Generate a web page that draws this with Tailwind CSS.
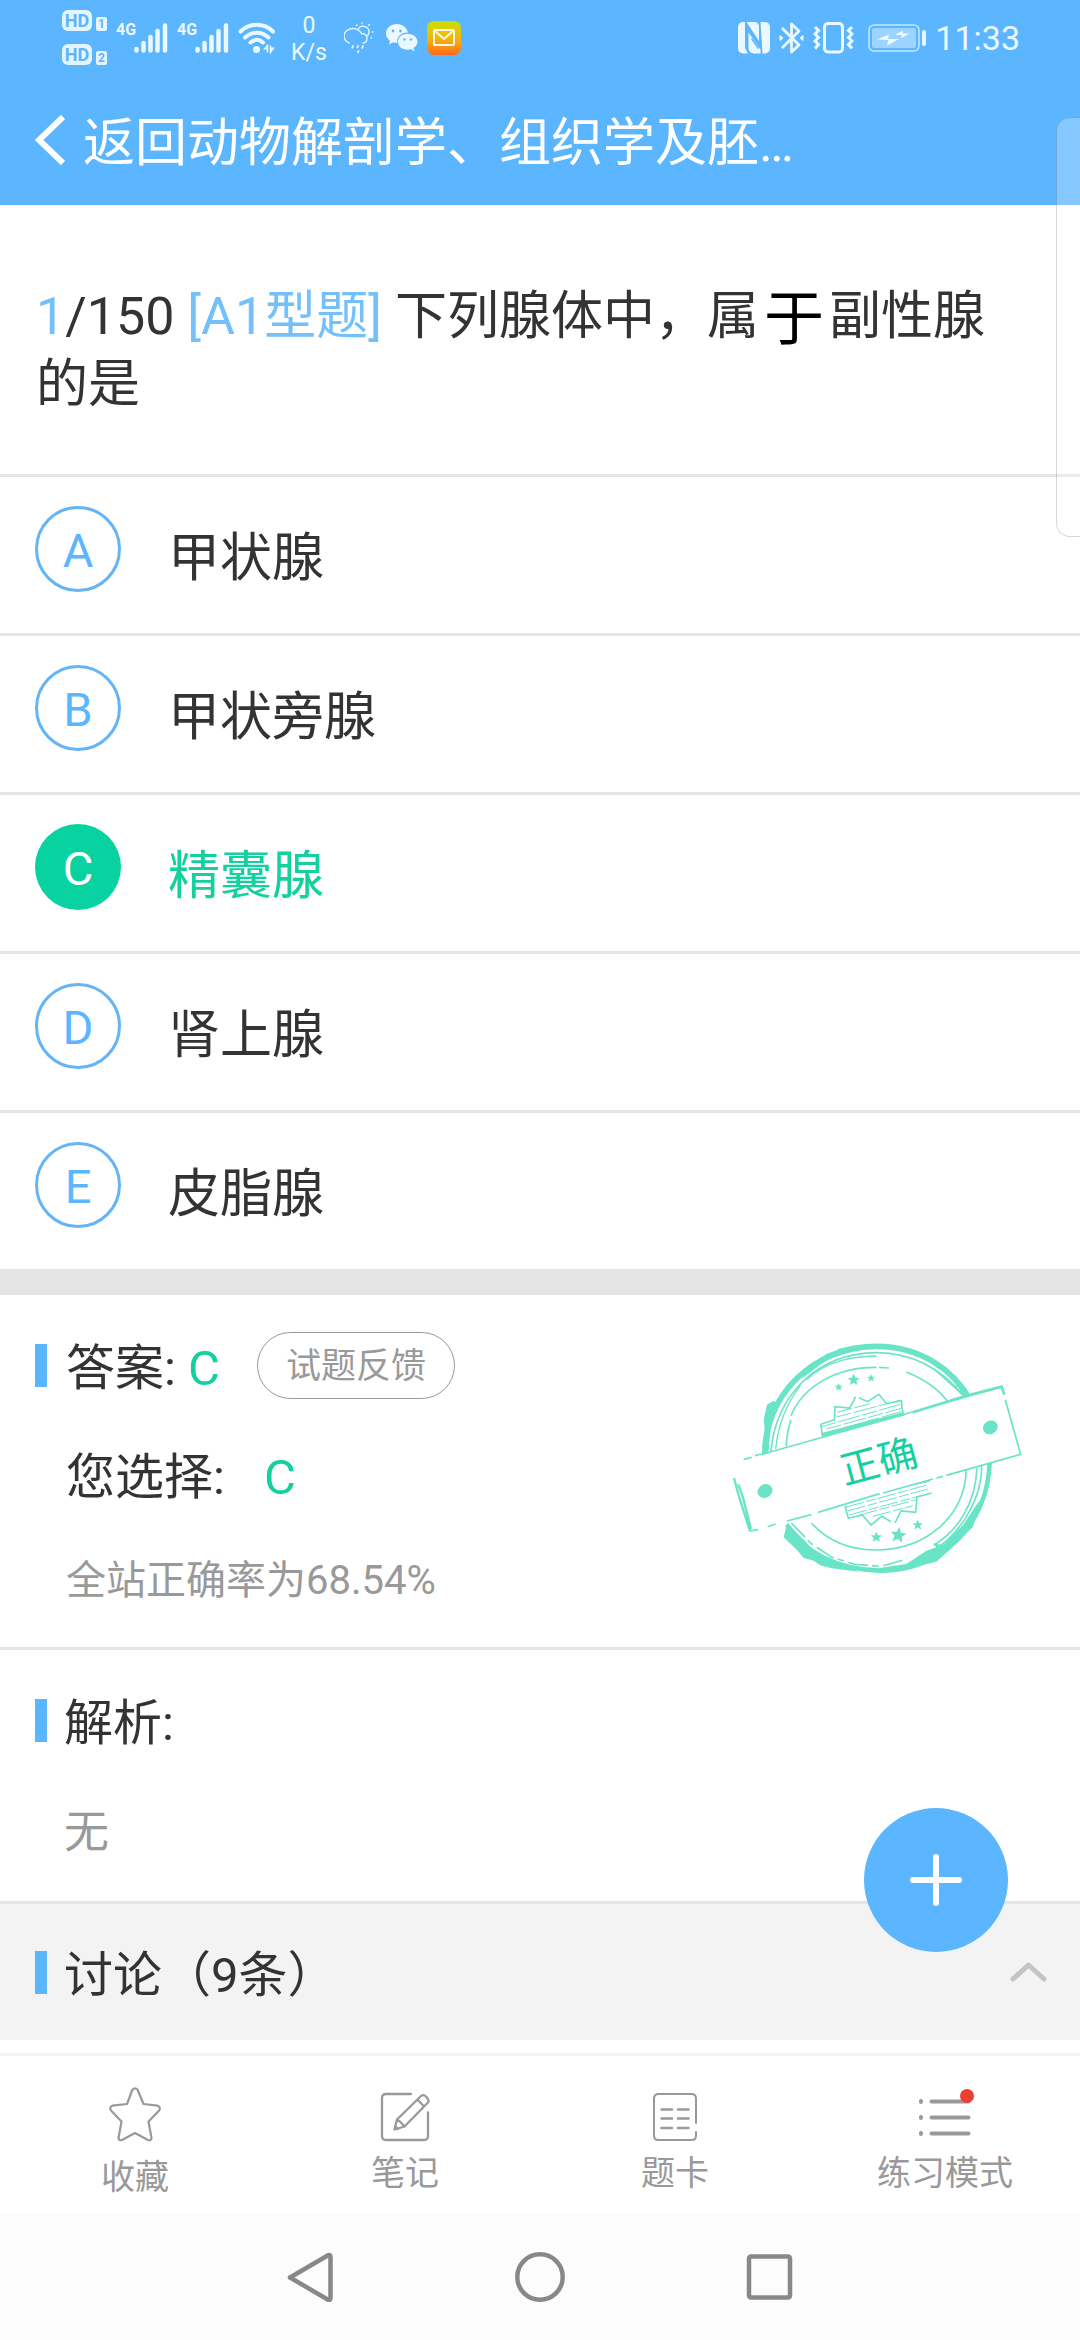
<!DOCTYPE html>
<html lang="zh-CN">
<head>
  <meta charset="UTF-8" />
  <meta name="viewport" content="width=device-width, initial-scale=1.0"/>
  <title>动物解剖学、组织学及胚胎学</title>
  <script src="https://cdn.jsdelivr.net/npm/@tailwindcss/browser@4"></script>
</head>
<body class="relative flex min-h-screen flex-col bg-white text-[#333] font-[family-name:Roboto,'Noto_Sans_CJK_SC',sans-serif]">

  <header class="bg-[#5bb6ff] text-white">
    <!-- Barra de estado -->
    <div class="flex h-[75px] items-center justify-between pl-[62px] pr-[60px] text-[#ebf8ff]">
      <div class="flex items-center gap-[9px]">
        <div class="flex flex-col gap-[13px]">
          <div class="flex items-end gap-1">
            <span class="flex h-[21px] w-[30px] items-center justify-center rounded-[6px] bg-[#e4f5ff] text-[18px] font-bold text-[#5bb6ff]">HD</span>
            <span class="flex h-[14px] w-[11px] items-center justify-center rounded-[2px] bg-[#e4f5ff] text-[12px] font-bold text-[#5bb6ff]">1</span>
          </div>
          <div class="flex items-end gap-1">
            <span class="flex h-[21px] w-[30px] items-center justify-center rounded-[6px] bg-[#e4f5ff] text-[18px] font-bold text-[#5bb6ff]">HD</span>
            <span class="flex h-[14px] w-[11px] items-center justify-center rounded-[2px] bg-[#e4f5ff] text-[12px] font-bold text-[#5bb6ff]">2</span>
          </div>
        </div>
        <div class="flex h-8 items-start">
          <span class="w-[18px] text-[16px] leading-[16px] font-bold">4G</span>
          <svg class="h-8 w-[34px]" viewBox="0 0 34 32" stroke="currentColor" stroke-width="4.5" stroke-linecap="round"><path d="M2.5 27v1.500M9.500 21v7.500M16.500 15v13.500M23.500 9v19.500M31 3.500v25"/></svg>
        </div>
        <div class="flex h-8 items-start">
          <span class="w-[18px] text-[16px] leading-[16px] font-bold">4G</span>
          <svg class="h-8 w-[34px]" viewBox="0 0 34 32" stroke="currentColor" stroke-width="4.5" stroke-linecap="round"><path d="M2.5 27v1.500M9.500 21v7.500M16.500 15v13.500M23.500 9v19.500M31 3.500v25"/></svg>
        </div>
        <svg class="h-8 w-[38px]" viewBox="0 0 38 32" fill="none" stroke="currentColor" stroke-width="4" stroke-linecap="round">
          <path d="M2.500 9.500c9-9 23.500-9 32.500 0M7 15.500c7-6.500 16.500-6.500 23.500 0M12.500 20.500c4-3.500 8.500-3.500 12.500 0"/>
          <circle cx="18.500" cy="27.500" r="3.500" fill="currentColor" stroke="none"/>
          <path d="M29 23v7.500M29 23l-4 4.500h4zM33 23v7.500M33 30.500l4-5h-4z" fill="currentColor" stroke="none"/>
          <path d="M29.500 23v7M32.500 24v7" stroke-width="1.500"/>
        </svg>
        <div class="ml-[6px] w-[36px] pt-[2px] text-center text-[23px] leading-[27px] whitespace-nowrap">0<br>K/s</div>
        <svg class="ml-2 h-8 w-[30px]" viewBox="0 0 30 32" fill="none" stroke="currentColor" stroke-width="1.300" stroke-linecap="round">
          <path d="M5.500 21C-1 19-1.500 11 3 8.500 7 5.500 14 5.500 17.500 11.500c4 0 5.500 2.500 5.500 5s-1.500 4.500-4 4.500"/>
          <path d="M14.500 6.500c3-4.500 11-2 10.500 4 0 2-1 3-2.500 4M12.500 3l.5.500M18 .8v.7M25.500 2.500l-.7.700M29 10h-.7M27.500 16l-.5-.4"/>
          <path d="M9 24l-.8 1.800M14 24l-.6 1.300M19 24l-.8 1.800M14.500 29l-.6 1.300" stroke-width="1.800"/>
        </svg>
        <svg class="ml-[3px] h-7 w-8" viewBox="0 0 32 28" fill="currentColor">
          <path d="M11 0C5 0 0 4 0 9.500c0 3 1.500 5.500 4 7.200L3 20.500l4-2.200c1.500.5 3 .6 4.500.5C10 13 15 8.500 21.800 8.600 21 3.500 16.500 0 11 0z"/>
          <path d="M21.500 9.800c-5.500 0-9.500 3.600-9.500 8s4 8 9.500 8c1.200 0 2.300-.2 3.300-.5l3.700 2-1-3.200c2.500-1.500 4-3.700 4-6.300 0-4.400-4.500-8-10-8z"/>
          <g fill="#5bb6ff"><circle cx="7" cy="7" r="1.400"/><circle cx="14.500" cy="7" r="1.400"/><circle cx="18.500" cy="15.500" r="1.200"/><circle cx="25" cy="15.500" r="1.200"/></g>
        </svg>
        <span class="flex size-[34px] items-center justify-center rounded-[7px] bg-gradient-to-b from-[#c4e000] via-[#f2b705] to-[#ff6a1a]">
          <svg class="h-[17px] w-[22px]" viewBox="0 0 22 17" fill="none" stroke="#fffbe8" stroke-width="2"><rect x="1" y="1" width="20" height="15" rx="1"/><path d="M2 2l9 8 9-8"/></svg>
        </span>
      </div>
      <div class="flex items-center gap-[9px]">
        <svg class="h-8 w-8" viewBox="0 0 32 32" fill="currentColor">
          <path d="M5 0h2v26l3 5.500H5a5 5 0 0 1-5-5V5a5 5 0 0 1 5-5z"/>
          <path d="M8.500 0H17q4 .5 4 5v14z"/>
          <path d="M10.500 10.500l12 17V31.500H16q-5.500-.5-5.500-6z"/>
          <path d="M22.500 0H27a5 5 0 0 1 5 5v21.500a5 5 0 0 1-5 5h-2.500z"/>
          <path d="M13.500 16.500l7 10" stroke="#5bb6ff" stroke-width="1.500"/>
        </svg>
        <svg class="h-8 w-[25px]" viewBox="0 0 25 32" fill="none" stroke="currentColor" stroke-width="2.800" stroke-linejoin="round">
          <path d="M3 6l17 17-7.500 7V2L20 9 3 26"/><path d="M1 13.500l3 2.500-3 2.500zM24 13.500L21 16l3 2.500z" stroke-width="1" fill="currentColor"/>
        </svg>
        <svg class="h-8 w-[41px]" viewBox="0 0 41 32" fill="none" stroke="currentColor" stroke-width="3">
          <rect x="11.500" y="1.500" width="18" height="28.500" rx="3.500"/>
          <path d="M2 5l3.500 3.500L2 12l3.500 3.500L2 19l3.500 3.500L2 26.500M39 5l-3.500 3.500L39 12l-3.500 3.500L39 19l-3.500 3.500L39 26.500"/>
        </svg>
        <svg class="ml-[5px] h-7 w-[58px]" viewBox="0 0 58 28" fill="none">
          <rect x="1" y="1" width="50" height="26" rx="5" stroke="#c4ebff" stroke-width="1.500"/>
          <rect x="4" y="4" width="44" height="20" rx="2" fill="#9dd3ff"/>
          <path d="M9 15.500l12-5-1 4.500h11l-12 6.500 1.500-5.500zM27 11l8-4.500-.5 3h6.500l-8 5 1-3.500z" fill="#f0faff"/>
          <rect x="54" y="6" width="4" height="16" rx="2" fill="#e8f7ff"/>
        </svg>
        <time class="text-[34px] leading-[40px]">11:33</time>
      </div>
    </div>
    <a href="#" class="flex h-[130px] items-center gap-[18px] pl-[35px] text-[52px] leading-[60px]">
      <svg class="h-[50px] w-[30px]" viewBox="0 0 30 50" fill="none" stroke="currentColor" stroke-width="6"><path d="M28 2L4 25l24 23"/></svg>
      <h1 class="pt-2">返回动物解剖学、组织学及胚…</h1>
    </a>
  </header>

  <main class="flex-1">
    <fieldset>
      <legend class="w-full border-b-[3px] border-[#e5e5e5] pt-[78px] pr-[60px] pb-[55px] pl-[36px] text-[52px] leading-[68px]">
        <span class="text-[#74c0fb]">1</span>/150 <span class="text-[#74c0fb]">[A1型题]</span> 下列腺体中，属<span class="px-[5px] align-middle text-[60px] leading-none text-black">于</span>副性腺的是
      </legend>

      <label class="flex h-[159px] items-start gap-[47px] border-b-[3px] border-[#e5e5e5] pt-[29px] pl-[35px]">
        <input type="radio" name="answer" value="A" class="sr-only">
        <span class="flex size-[86px] items-center justify-center rounded-full border-[3px] border-[#64b4f6] pt-1 text-[47px] text-[#5bb6ff]">A</span>
        <span class="pt-[19px] text-[52px] leading-[68px]">甲状腺</span>
      </label>
      <label class="flex h-[159px] items-start gap-[47px] border-b-[3px] border-[#e5e5e5] pt-[29px] pl-[35px]">
        <input type="radio" name="answer" value="B" class="sr-only">
        <span class="flex size-[86px] items-center justify-center rounded-full border-[3px] border-[#64b4f6] pt-1 text-[47px] text-[#5bb6ff]">B</span>
        <span class="pt-[19px] text-[52px] leading-[68px]">甲状旁腺</span>
      </label>
      <label class="flex h-[159px] items-start gap-[47px] border-b-[3px] border-[#e5e5e5] pt-[29px] pl-[35px]">
        <input type="radio" name="answer" value="C" class="sr-only" checked>
        <span class="flex size-[86px] items-center justify-center rounded-full bg-[#08d3a0] pt-1 text-[47px] text-white">C</span>
        <span class="pt-[19px] text-[52px] leading-[68px] text-[#14d09e]">精囊腺</span>
      </label>
      <label class="flex h-[159px] items-start gap-[47px] border-b-[3px] border-[#e5e5e5] pt-[29px] pl-[35px]">
        <input type="radio" name="answer" value="D" class="sr-only">
        <span class="flex size-[86px] items-center justify-center rounded-full border-[3px] border-[#64b4f6] pt-1 text-[47px] text-[#5bb6ff]">D</span>
        <span class="pt-[19px] text-[52px] leading-[68px]">肾上腺</span>
      </label>
      <label class="flex h-[159px] items-start gap-[47px] border-b-[3px] border-[#e5e5e5] pt-[29px] pl-[35px]">
        <input type="radio" name="answer" value="E" class="sr-only">
        <span class="flex size-[86px] items-center justify-center rounded-full border-[3px] border-[#64b4f6] pt-1 text-[47px] text-[#5bb6ff]">E</span>
        <span class="pt-[19px] text-[52px] leading-[68px]">皮脂腺</span>
      </label>
    </fieldset>
    <div class="h-[23px] bg-[#e4e4e4]"></div>

    <!-- Respuesta y sello -->
    <section class="flex items-start justify-between border-b-[3px] border-[#e5e5e5] pt-8 pr-[57px] pb-[36px] pl-[35px]">
      <div class="text-[49px] leading-[68px]">
        <div class="flex items-center">
          <span class="h-[43px] w-3 bg-[#5bb6ff]"></span>
          <p class="ml-[19px] pt-2">答案: <span class="text-[#14d09e]">C</span></p>
          <button type="button" class="ml-[37px] h-[67px] w-[198px] rounded-full border border-[#999] pt-1 text-[35px] leading-[40px] text-[#999]">试题反馈</button>
        </div>
        <p class="mt-[41px] ml-[31px]">您选择: <span class="ml-[27px] text-[#14d09e]">C</span></p>
        <p class="mt-[39px] ml-[31px] text-[40px] leading-[60px] text-[#999]">全站正确率为68.54%</p>
      </div>
      <svg class="mt-4 h-[232px] w-[290px]" viewBox="100 100 870 696" fill="none" stroke="#6ae4c6" stroke-width="5">
        <defs>
          <path id="star" d="M0-24L7-8 24-7 11 4 15 21 0 12-15 21-11 4-24-7-7-8z"/>
        </defs>
        <!-- anillos -->
        <path d="M195 440C192 260 340 110 531 110c130 0 230 70 280 160" stroke-width="17"/>
        <path d="M870 455C865 650 720 785 540 783 410 780 310 725 262 645" stroke-width="14"/>
        <path d="M192 430l4-60-4-40 10-45 20-12 12 10-20 60-8 90zM330 175l50-42 30-10 6-6 60-12-20 20-70 22-80 60z" fill="#6ae4c6" stroke="none"/>
        <path d="M540 775l80-12 60-40 30-10-10-12 30 5 60-60 50-75-20 80-70 70-40 35-100 25-70 10z" fill="#6ae4c6" stroke="none"/>
        <path d="M262 640l60 60 20 30 40 25 40 10 60 22-90-12-30-8-20-14-30-8-20-24-40-38z" fill="#6ae4c6" stroke="none"/>
        <path d="M214 425C228 260 350 130 531 129c100 0 190 45 262 130" stroke-width="5"/>
        <path d="M228 418C236 340 262 280 302 228M320 210C380 155 450 140 531 139M700 175l90 82" stroke-width="4"/>
        <path d="M846 470C845 590 760 690 700 722M832 475c-5 110-60 190-130 232" stroke-width="5"/>
        <path d="M275 640l60 62 60 40 70 22 80 6 76-22" stroke-width="5" stroke-dasharray="60 12 20 14"/>
        <path d="M260 410c2-50 10-65 14-80M274 318C310 230 410 172 530 173M538 173l30 2M620 187c50 20 90 45 122 86"/>
        <path d="M335 640c50 55 115 80 190 81 160 0 270-105 275-240"/>
        <path d="M765 210l8 20 12-2-5 18 20-10M685 140l5 18" stroke-width="4"/>
        <!-- engranaje -->
        <path d="M368 378l-4-34 40-14 2-39 44 4 18-34M478 264l26 12 34-22 22 28 45-9 5 40"/>
        <path d="M362 352l240-68M380 358l225-62M370 372l235-66M410 322l190-50M412 308l100-26" stroke-width="3" stroke-dasharray="46 8 70 6"/>
        <path d="M367 376l246-62" stroke-width="13"/>
        <path d="M436 588l10 38 42-10 26 30 32-26 28 16M586 640l18-36 44 4 4-46 44-12M606 532l84-18"/>
        <path d="M440 592l250-68M444 604l240-66M448 616l210-56M480 616l170-46M520 620l120-32" stroke-width="3" stroke-dasharray="54 8 30 6"/>
        <g fill="#6ae4c6" stroke="none">
          <use href="#star" transform="translate(417 232) scale(.5)"/>
          <use href="#star" transform="translate(462 210) scale(.75)"/>
          <use href="#star" transform="translate(514 205) scale(.5)"/>
          <use href="#star" transform="translate(530 682) scale(.7)"/>
          <use href="#star" transform="translate(596 676) rotate(8)"/>
          <use href="#star" transform="translate(654 646) scale(.65)"/>
        </g>
        <!-- cinta -->
        <path d="M110 458L905 232l58 202L150 664z" fill="#fff" stroke="none"/>
        <path d="M132 449l24-6M166 438l20-5M190 433L905 232M917 270l46 164L740 497M730 500l-20 5M700 508l-150 42M540 552l-185 56M335 615L262 634M228 643l-24 8M176 660l-26 4"/>
        <path d="M640 308l160-50 106-27 8 24" stroke-width="8"/>
        <path d="M370 378l242-64" stroke-width="9"/>
        <path d="M103 505l14 52 34 108M116 524l14 40 24 94" stroke-width="7"/>
        <g fill="#6ae4c6" stroke="none">
          <ellipse cx="196" cy="544" rx="23" ry="20" transform="rotate(-30 196 544)"/>
          <ellipse cx="872" cy="353" rx="23" ry="20" transform="rotate(-30 872 353)"/>
        </g>
        <text x="537" y="497" transform="rotate(-15 537 455)" text-anchor="middle" font-size="117" fill="#14d09e" stroke="none">正确</text>
      </svg>
    </section>

    <section class="border-b-[3px] border-[#e5e5e5] pt-8 pb-[34px] pl-[35px]">
      <div class="flex items-center text-[49px] leading-[68px]">
        <span class="h-[43px] w-3 bg-[#5bb6ff]"></span>
        <h2 class="ml-[17px] pt-2">解析:</h2>
      </div>
      <p class="mt-[41px] ml-[29px] text-[45px] leading-[68px] text-[#999]">无</p>
    </section>

    <section class="relative flex h-[136px] items-center justify-between bg-[#f3f3f3] pr-[33px] pl-[35px]">
      <div class="flex items-center text-[49px] leading-[68px]">
        <span class="h-[43px] w-3 bg-[#5bb6ff]"></span>
        <h2 class="ml-[17px] pt-2">讨论（9条）</h2>
      </div>
      <button type="button" aria-label="收起">
        <svg class="h-5 w-[37px]" viewBox="0 0 37 20" fill="none" stroke="#c4c4c4" stroke-width="5" stroke-linecap="round" stroke-linejoin="round"><path d="M3 17L18.500 3 34 17"/></svg>
      </button>
      <button type="button" aria-label="添加" class="absolute -top-24 right-[72px] flex size-36 items-center justify-center rounded-full bg-[#5bb6ff]">
        <svg class="size-[52px]" viewBox="0 0 52 52" stroke="#fff" stroke-width="6" stroke-linecap="round"><path d="M26 3v46M3 26h46"/></svg>
      </button>
    </section>
  </main>

  <footer>
    <nav class="grid h-[161px] grid-cols-4 border-t-[3px] border-[#f3f3f3] text-center text-[34px] leading-[44px] text-[#999]">
      <a href="#" class="flex flex-col items-center gap-[13px] pt-[31px]">
        <svg class="h-[55px] w-[52px]" viewBox="0 0 52 55" fill="none" stroke="currentColor" stroke-width="2.200" stroke-linejoin="round"><path d="M23.500 2.500Q26 0 28.500 2.500L34.500 17l14 1.700q3.500 1.300 1.700 4.700L39.500 34.500 42.500 51q-.5 3-3.500 2L26 46 13 53q-3 1-3.500-2L12.500 34.500 2 23.500Q0 20 3.500 18.700L18 17z"/></svg>
        <span>收藏</span>
      </a>
      <a href="#" class="flex flex-col items-center gap-[9px] pt-[36px]">
        <svg class="h-[50px] w-[50px]" viewBox="0 0 50 50" fill="none" stroke="currentColor" stroke-width="2.300" stroke-linecap="round" stroke-linejoin="round">
          <path d="M31 2H6Q2 2 2 6v38q0 4 4 4h38q4 0 4-4V20.500"/>
          <path d="M14.500 37.500l2.500-10L41 4q2.500-2 5 .5l1.500 2q2 2.500 0 4.500L24.500 34.500zM17 27.500q4 2 7.500 7M37.500 7.500l6.500 7M15 34l3 3"/>
        </svg>
        <span>笔记</span>
      </a>
      <a href="#" class="flex flex-col items-center gap-[9px] pt-[36px]">
        <svg class="h-[50px] w-[46px]" viewBox="0 0 46 50" fill="none" stroke="currentColor" stroke-width="2" stroke-linecap="round">
          <path d="M44 31V6.500Q44 2 39.500 2h-33Q2 2 2 6.500v37Q2 48 6.500 48h33q4.500 0 4.500-4.500V40"/>
          <path d="M9.500 17.500h10.500M26 17.500h10.500M9.500 26.500h10.500M26 26.500h10.500M9.500 36h10.500M26 36h10.500" stroke-width="2.400"/>
        </svg>
        <span>题卡</span>
      </a>
      <a href="#" class="flex flex-col items-center gap-[9px] pt-[36px]">
        <span class="relative">
          <svg class="h-[50px] w-[52px]" viewBox="0 0 52 50" fill="none" stroke="currentColor" stroke-width="4" stroke-linecap="round"><path d="M2 9v1M2 25v1M2 41v1M12.500 9.500h37M12.500 25.500h37M12.500 41.500h37"/></svg>
          <span class="absolute -top-[3px] -right-[3px] size-[14px] rounded-full bg-[#ec3f33]"></span>
        </span>
        <span>练习模式</span>
      </a>
    </nav>
    <!-- Botones del sistema -->
    <div class="flex h-[126px] items-center justify-center gap-[180px] bg-[#fcfcfc] text-[#888]">
      <button type="button" aria-label="返回"><svg class="size-[50px]" viewBox="0 0 50 50" fill="none" stroke="currentColor" stroke-width="4.500" stroke-linejoin="round"><path d="M43.500 3L5 25.500 43.500 48q2 0 2-2V5q0-2-2-2z"/></svg></button>
      <button type="button" aria-label="主页"><svg class="size-[50px]" viewBox="0 0 50 50" fill="none" stroke="currentColor" stroke-width="4.500"><circle cx="25" cy="25" r="22.700"/></svg></button>
      <button type="button" aria-label="最近任务"><svg class="size-[50px]" viewBox="0 0 50 50" fill="none" stroke="currentColor" stroke-width="4.500"><rect x="4" y="4.500" width="41" height="41" rx="2"/></svg></button>
    </div>
  </footer>

  <!-- Panel lateral del sistema -->
  <aside class="absolute top-[117px] right-0 h-[420px] w-6 rounded-l-[14px] border border-r-0 border-black/15 bg-white/25"></aside>
</body>
</html>
